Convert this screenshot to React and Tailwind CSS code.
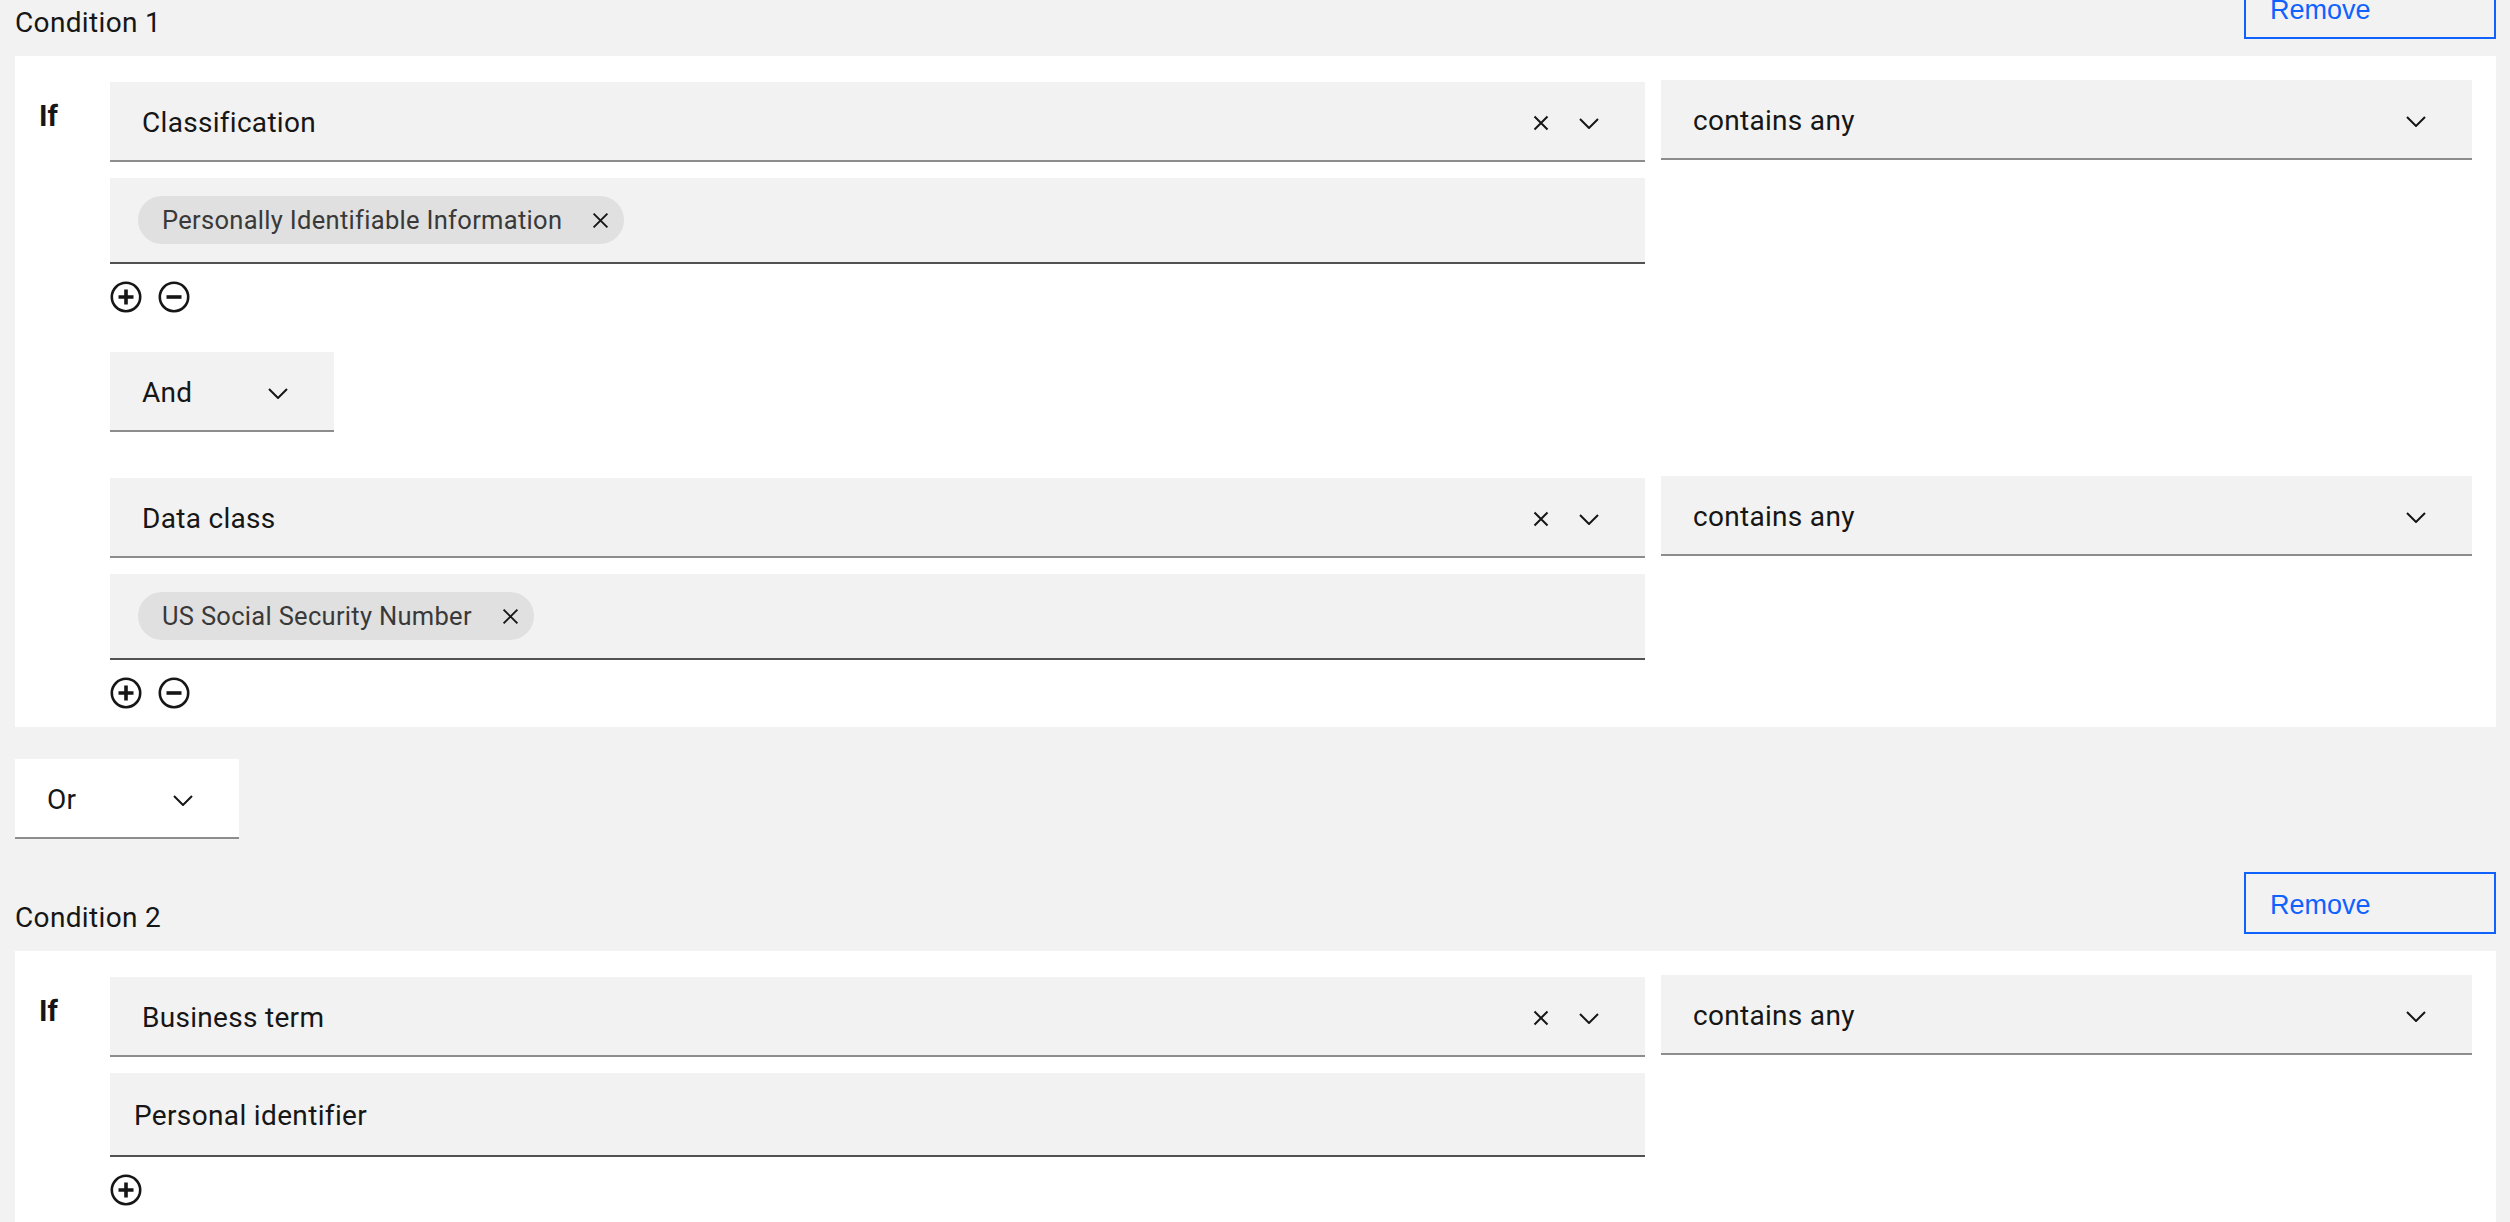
import React from "react";

const Chevron = () => (
  <svg width="20" height="11" viewBox="0 0 20 11" fill="none" className="shrink-0">
    <path d="M1 1l9 9 9-9" stroke="#161616" strokeWidth="2" />
  </svg>
);

const XIcon = ({ size = 16, w = 2 }) => (
  <svg width={size} height={size} viewBox="0 0 16 16" fill="none" className="shrink-0">
    <path d="M1.5 1.5l13 13M14.5 1.5l-13 13" stroke="#161616" strokeWidth={w} />
  </svg>
);

const AddIcon = () => (
  <svg width="32" height="32" viewBox="0 0 32 32" fill="none">
    <circle cx="16" cy="16" r="14.2" stroke="#161616" strokeWidth="2.6" />
    <path d="M16 8.5v15M8.5 16h15" stroke="#161616" strokeWidth="3.6" />
  </svg>
);

const SubIcon = () => (
  <svg width="32" height="32" viewBox="0 0 32 32" fill="none">
    <circle cx="16" cy="16" r="14.2" stroke="#161616" strokeWidth="2.6" />
    <path d="M8.5 16h15" stroke="#161616" strokeWidth="3.6" />
  </svg>
);

function Select({ label, clear }) {
  return (
    <div className="flex items-center h-[80px] bg-[#f2f2f2] border-b-2 border-[#8d8d8d] pl-[32px] pr-[46px] pt-[4px]">
      <span className="flex-1 text-[28px] leading-[32px] tracking-[0.3px] text-[#161616]">{label}</span>
      {clear && (
        <span className="mr-[30px] flex items-center">
          <XIcon />
        </span>
      )}
      <Chevron />
    </div>
  );
}

function ChipField({ chip }) {
  return (
    <div className="flex items-center h-[86px] bg-[#f2f2f2] border-b-2 border-[#525252] pl-[28px]">
      <div className="flex items-center h-[48px] rounded-full bg-[#e0e0e0] pl-[24px] pr-[15px]">
        <span className="text-[25.5px] leading-[30px] tracking-[0.3px] text-[#393939]">{chip}</span>
        <span className="ml-[30px] flex items-center">
          <XIcon size={17} w={1.8} />
        </span>
      </div>
    </div>
  );
}

function Header({ title }) {
  return (
    <div className="flex items-end justify-between">
      <span className="text-[28px] leading-[32px] tracking-[0.35px] text-[#161616]">{title}</span>
      <button className="w-[252px] h-[62px] border-2 border-[#0f62fe] flex items-center pl-[24px] pt-[4px] text-[27px] text-[#0f62fe] font-['Liberation_Sans',Arial,sans-serif]">
        Remove
      </button>
    </div>
  );
}

function Row({ field, children, icons }) {
  return (
    <div className="flex gap-[16px]">
      <div className="w-[1535px] flex flex-col pt-[2px]">
        <Select label={field} clear />
        <div className="mt-[16px]">{children}</div>
        <div className="mt-[17px] flex gap-[16px]">
          <AddIcon />
          {icons === 2 && <SubIcon />}
        </div>
      </div>
      <div className="w-[811px]">
        <Select label="contains any" />
      </div>
    </div>
  );
}

function Card({ children }) {
  return (
    <div className="mt-[17px] bg-white flex pt-[24px] pb-[18px] pr-[24px]">
      <div className="w-[95px] pl-[24px] pt-[20px] shrink-0">
        <span className="text-[29px] leading-[32px] font-bold text-[#161616]">If</span>
      </div>
      <div className="flex flex-col">{children}</div>
    </div>
  );
}

export default function App() {
  return (
    <div className="h-[1222px] overflow-hidden bg-[#f2f2f2] font-['Roboto',sans-serif] text-[#161616]">
      <div className="-mt-[23px] pl-[15px] pr-[14px]">
        <Header title="Condition 1" />
        <Card>
          <Row field="Classification" icons={2}>
            <ChipField chip="Personally Identifiable Information" />
          </Row>
          <div className="mt-[39px] w-[224px]">
            <Select label="And" />
          </div>
          <div className="mt-[44px]">
            <Row field="Data class" icons={2}>
              <ChipField chip="US Social Security Number" />
            </Row>
          </div>
        </Card>

        <div className="mt-[32px] w-[224px]">
          <div className="flex items-center h-[80px] bg-white border-b-2 border-[#8d8d8d] pl-[32px] pr-[46px] pt-[4px]">
            <span className="flex-1 text-[28px] leading-[32px] tracking-[0.3px]">Or</span>
            <Chevron />
          </div>
        </div>

        <div className="mt-[33px]">
          <Header title="Condition 2" />
        </div>
        <Card>
          <Row field="Business term" icons={1}>
            <div className="flex items-center h-[84px] bg-[#f2f2f2] border-b-2 border-[#525252] pl-[24px] pt-[4px]">
              <span className="text-[28px] leading-[32px] tracking-[0.35px]">Personal identifier</span>
            </div>
          </Row>
        </Card>
      </div>
    </div>
  );
}
